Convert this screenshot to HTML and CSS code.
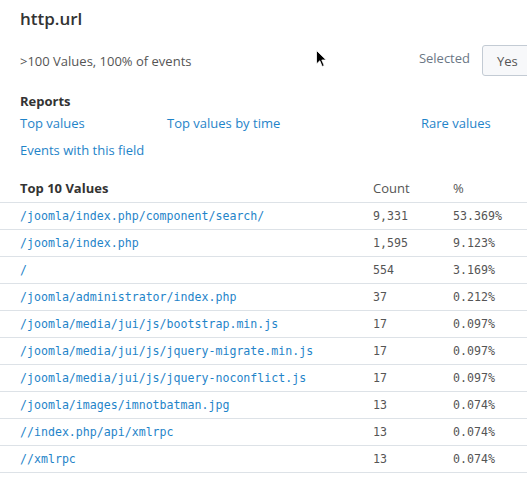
FILE: index.html
```html
<!DOCTYPE html>
<html lang="en">
<head>
<meta charset="utf-8">
<title>http.url</title>
<link rel="stylesheet" href="styles.css">
</head>
<body>
<div class="panel">
  <h1 class="title">http.url</h1>
  <div class="summary">
    <span class="summary-text">&gt;100 Values, 100% of events</span>
    <div class="selected">
      <span class="selected-label">Selected</span>
      <button class="btn">Yes</button>
    </div>
  </div>
  <div class="reports">
    <h2 class="reports-title">Reports</h2>
    <div class="report-links">
      <a class="link" href="#">Top values</a>
      <a class="link" href="#">Top values by time</a>
      <a class="link" href="#">Rare values</a>
      <a class="link" href="#">Events with this field</a>
    </div>
  </div>
  <table class="values">
    <colgroup>
      <col class="col-value">
      <col class="col-count">
      <col class="col-pct">
    </colgroup>
    <thead>
      <tr><th class="th-value">Top 10 Values</th><th>Count</th><th>%</th></tr>
    </thead>
    <tbody>
      <tr><td class="val">/joomla/index.php/component/search/</td><td>9,331</td><td>53.369%</td></tr>
      <tr><td class="val">/joomla/index.php</td><td>1,595</td><td>9.123%</td></tr>
      <tr><td class="val">/</td><td>554</td><td>3.169%</td></tr>
      <tr><td class="val">/joomla/administrator/index.php</td><td>37</td><td>0.212%</td></tr>
      <tr><td class="val">/joomla/media/jui/js/bootstrap.min.js</td><td>17</td><td>0.097%</td></tr>
      <tr><td class="val">/joomla/media/jui/js/jquery-migrate.min.js</td><td>17</td><td>0.097%</td></tr>
      <tr><td class="val">/joomla/media/jui/js/jquery-noconflict.js</td><td>17</td><td>0.097%</td></tr>
      <tr><td class="val">/joomla/images/imnotbatman.jpg</td><td>13</td><td>0.074%</td></tr>
      <tr><td class="val">//index.php/api/xmlrpc</td><td>13</td><td>0.074%</td></tr>
      <tr><td class="val">//xmlrpc</td><td>13</td><td>0.074%</td></tr>
    </tbody>
  </table>
  <svg class="cursor" width="12" height="18" viewBox="0 0 12 18"><path d="M0.5 0.5 L0.5 14 L3.8 10.8 L6.2 16.5 L8.2 15.6 L5.8 10 L10.2 10 Z" fill="#000" stroke="#fff" stroke-width="0.8"/></svg>
</div>
</body>
</html>
```
FILE: styles.css
```css
* { box-sizing: border-box; }
html, body { margin: 0; padding: 0; background: #fff; }
body {
  font-family: "Open Sans", "Liberation Sans", sans-serif;
  font-size: 13px;
  color: #555;
}
.panel { position: relative; width: 527px; height: 481px; overflow: hidden; }
.title {
  margin: 0;
  padding: 8px 20px 0;
  font-size: 17px;
  line-height: 22px;
  font-weight: 600;
  color: #333;
}
.summary {
  display: flex;
  align-items: center;
  justify-content: space-between;
  margin-top: 15px;
  padding-left: 20px;
  height: 31px;
}
.summary-text { color: #555; line-height: 18px; }
.selected { display: flex; align-items: center; gap: 12px; margin-right: -12px; }
.selected-label { color: #6b7785; position: relative; top: -3px; }
.btn {
  font-family: inherit;
  font-size: 13px;
  color: #555;
  background: #f7f8fa;
  border: 1px solid #c3cbd4;
  border-radius: 3px;
  height: 31px;
  padding: 0 14px;
  width: 57px;
  text-align: left;
}
.reports { padding: 0 20px; margin-top: 16px; }
.reports-title {
  margin: 0;
  font-size: 13px;
  line-height: 18px;
  font-weight: 700;
  color: #333;
}
.report-links {
  display: grid;
  grid-template-columns: 147px 254px auto;
  row-gap: 9px;
  margin-top: 4px;
}
.link { color: #1f84c9; text-decoration: none; line-height: 18px; white-space: nowrap; }
.values {
  width: 527px;
  margin-top: 17px;
  border-collapse: collapse;
  table-layout: fixed;
}
.col-value { width: 373px; }
.col-count { width: 80px; }
.col-pct { width: 74px; }
.values th {
  text-align: left;
  font-weight: 400;
  color: #555;
  height: 26px;
  padding: 0 0 2px;
  border-bottom: 1px solid #dde2e7;
  vertical-align: middle;
}
.values th.th-value { padding-left: 20px; font-weight: 700; color: #333; }
.values td {
  height: 27px;
  padding: 0;
  border-bottom: 1px solid #dde2e7;
  font-family: "DejaVu Sans Mono", "Liberation Mono", monospace;
  font-size: 11.6px;
  color: #555;
  white-space: nowrap;
  vertical-align: middle;
}
.values td.val { padding-left: 20px; color: #1f84c9; }
.cursor { position: absolute; left: 316px; top: 50px; }
```
